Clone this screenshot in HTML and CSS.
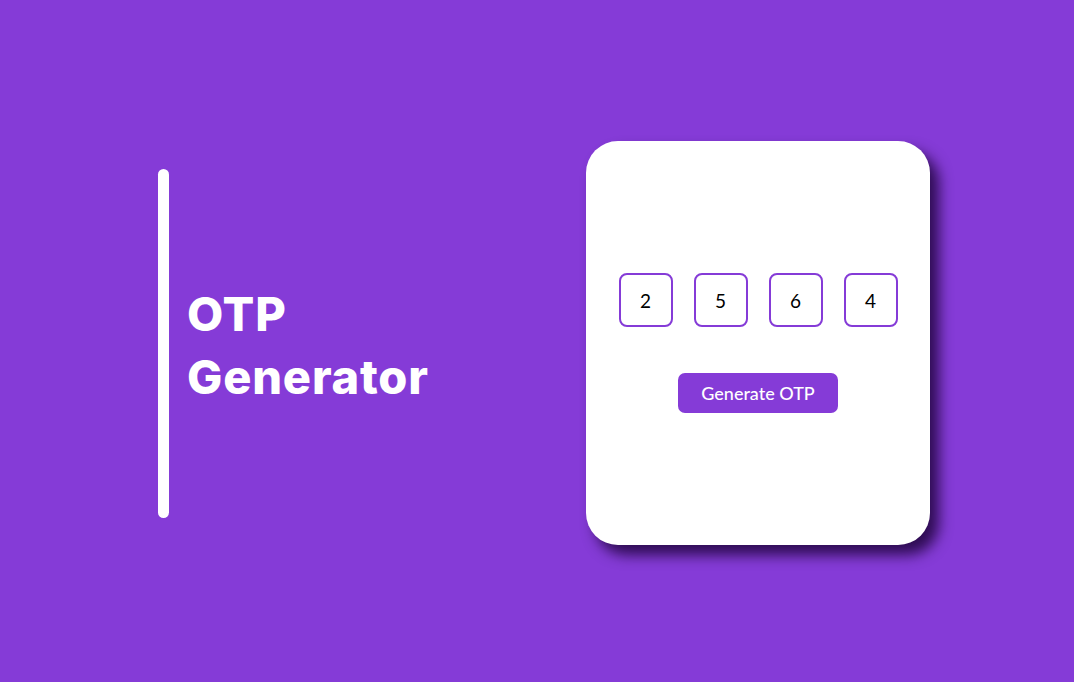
FILE: index.html
```html
<!DOCTYPE html>
<html>
<head>
<meta charset="utf-8">
<link rel="stylesheet" href="styles.css">
</head>
<body>
<main class="page">
  <section class="intro">
    <div class="bar"></div>
    <h1 class="title">OTP<br>Generator</h1>
  </section>
  <section class="card">
    <div class="digits">
      <div class="digit">2</div>
      <div class="digit">5</div>
      <div class="digit">6</div>
      <div class="digit">4</div>
    </div>
    <button class="generate">Generate OTP</button>
  </section>
</main>
</body>
</html>
```
FILE: styles.css
```css
html, body {
  margin: 0;
  padding: 0;
  height: 100%;
}
body {
  background: #853bd7;
  font-family: "Lato", "Inter", sans-serif;
}
.page {
  height: 100%;
  display: flex;
  align-items: center;
  padding-left: 158px;
  box-sizing: border-box;
}
.intro {
  width: 428px;
  display: flex;
  align-items: center;
  gap: 18px;
  margin-top: 4px;
}
.bar {
  width: 11px;
  height: 349px;
  background: #fff;
  border-radius: 6px;
  flex: none;
}
.title {
  margin: 0;
  color: #fff;
  font-family: "Inter", "Lato", sans-serif;
  font-size: 47px;
  font-weight: 800;
  line-height: 63px;
  letter-spacing: 0.8px;
  padding-top: 4px;
}
.card {
  width: 344px;
  height: 404px;
  background: #fff;
  border-radius: 32px;
  box-shadow: 9px 10px 14px rgba(25, 0, 50, 0.8);
  display: flex;
  flex-direction: column;
  align-items: center;
  justify-content: center;
  gap: 46px;
  margin-top: 4px;
}
.digits {
  display: flex;
  gap: 21px;
}
.digit {
  width: 50px;
  height: 50px;
  border: 2px solid #853bd7;
  border-radius: 8px;
  display: flex;
  align-items: center;
  justify-content: center;
  font-size: 19px;
  color: #000;
}
.generate {
  width: 160px;
  height: 40px;
  border: none;
  border-radius: 7px;
  background: #853bd7;
  color: #fff;
  font-family: inherit;
  font-size: 18px;
  font-weight: 500;
  padding: 0;
}
```
